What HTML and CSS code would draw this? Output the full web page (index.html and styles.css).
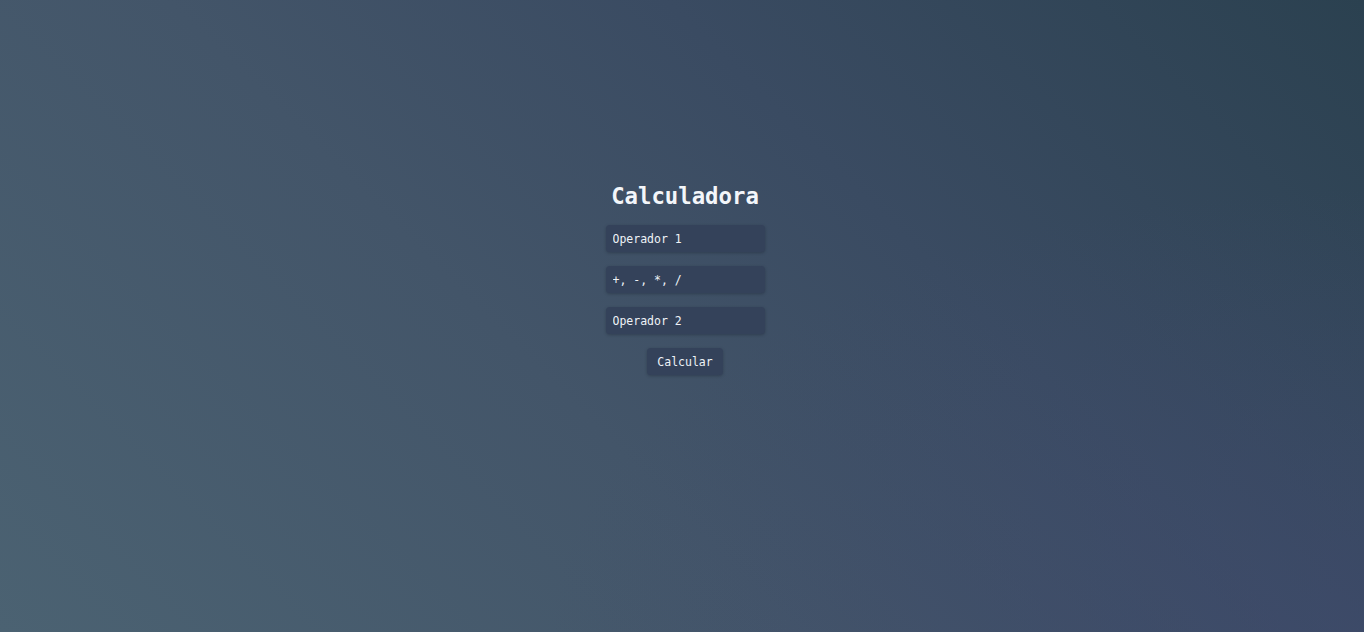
FILE: index.html
```html
<!DOCTYPE html>
<html lang="pt">
<head>
<meta charset="utf-8">
<title>Calculadora</title>
<link rel="stylesheet" href="styles.css">
</head>
<body>
<main class="calc">
  <h1 class="title">Calculadora</h1>
  <input class="field" type="text" placeholder="Operador 1">
  <input class="field" type="text" placeholder="+, -, *, /">
  <input class="field" type="text" placeholder="Operador 2">
  <button class="btn" type="button">Calcular</button>
</main>
</body>
</html>
```
FILE: styles.css
```css
html, body {
  margin: 0;
  height: 100%;
}
body {
  font-family: "DejaVu Sans Mono", "Liberation Mono", monospace;
  background:
    radial-gradient(ellipse 60% 70% at 100% 100%, rgba(64, 74, 110, 0.55), rgba(64, 74, 110, 0) 100%),
    linear-gradient(45deg, #4b6272 0%, #435569 40%, #3a4b62 65%, #2b4150 100%);
  display: flex;
  justify-content: center;
  color: #fff;
}
.calc {
  display: flex;
  flex-direction: column;
  align-items: center;
  padding-top: 182px;
  padding-left: 6px;
}
.title {
  margin: 0 0 15px;
  font-size: 22.3px;
  font-weight: bold;
  line-height: 28px;
  color: #f3f6fa;
}
.field {
  box-sizing: border-box;
  width: 159px;
  height: 27px;
  margin: 0 0 14px;
  padding: 0 7px;
  border: none;
  border-radius: 4px;
  background: #34425a;
  box-shadow: 0 1px 3px rgba(20, 28, 40, 0.35);
  font-family: inherit;
  font-size: 11.5px;
  color: #fff;
  outline: none;
}
.field::placeholder {
  color: #eef2f7;
  opacity: 1;
}
.btn {
  box-sizing: border-box;
  width: 76px;
  height: 27px;
  border: none;
  border-radius: 4px;
  background: #34425a;
  box-shadow: 0 1px 3px rgba(20, 28, 40, 0.35);
  font-family: inherit;
  font-size: 11.5px;
  color: #eef2f7;
  cursor: pointer;
}
```
